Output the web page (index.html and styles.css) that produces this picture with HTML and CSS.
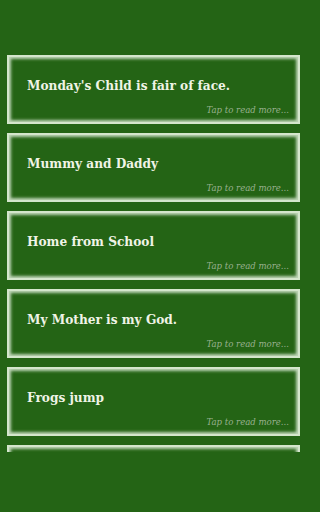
FILE: index.html
```html
<!DOCTYPE html>
<html>
<head>
<meta charset="utf-8">
<link rel="stylesheet" href="styles.css">
</head>
<body>
<div class="list">
  <div class="card"><div class="title">Monday's Child is fair of face.</div><div class="more">Tap to read more...</div></div>
  <div class="card"><div class="title">Mummy and Daddy</div><div class="more">Tap to read more...</div></div>
  <div class="card"><div class="title">Home from School</div><div class="more">Tap to read more...</div></div>
  <div class="card"><div class="title">My Mother is my God.</div><div class="more">Tap to read more...</div></div>
  <div class="card"><div class="title">Frogs jump</div><div class="more">Tap to read more...</div></div>
  <div class="card"></div>
</div>
</body>
</html>
```
FILE: styles.css
```css
html, body {
  margin: 0;
  padding: 0;
  background: #246415;
  height: 512px;
  overflow: hidden;
}
.list {
  width: 307px;
  height: 452px;
  overflow: hidden;
  padding: 55px 7px 0 7px;
  box-sizing: border-box;
  display: flex;
  flex-direction: column;
  gap: 9px;
}
.card {
  flex: none;
  height: 69px;
  box-sizing: border-box;
  border: 2px solid #d4e6cc;
  box-shadow: inset 0 0 3px 2px rgba(240, 250, 235, 0.75);
  background: #246415;
  padding: 17px 9px 0 18px;
  display: flex;
  flex-direction: column;
}
.title {
  font-family: "DejaVu Serif", serif;
  font-stretch: semi-condensed;
  font-weight: bold;
  font-size: 13.5px;
  color: #f0f4e6;
  line-height: 22px;
}
.more {
  font-family: "DejaVu Serif", serif;
  font-stretch: semi-condensed;
  font-style: italic;
  font-size: 9.5px;
  color: #98b08e;
  text-align: right;
  margin-top: 8px;
}
```
